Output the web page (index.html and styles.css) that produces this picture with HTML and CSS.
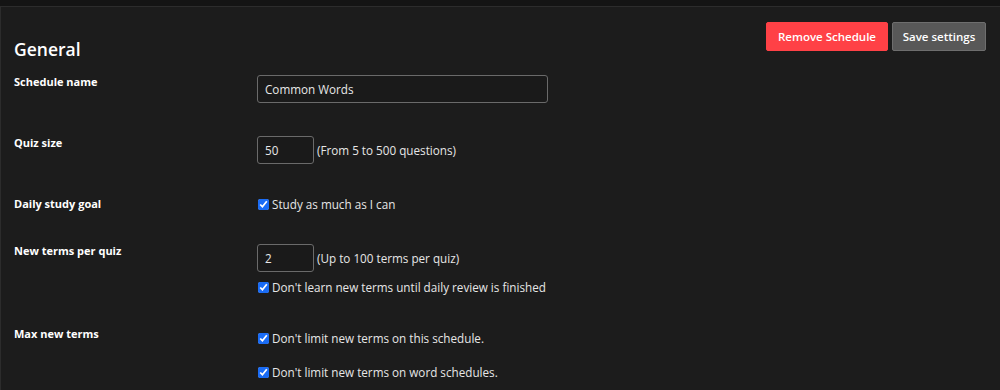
FILE: index.html
```html
<!DOCTYPE html>
<html lang="en">
<head>
  <meta charset="UTF-8">
  <title>Schedule settings</title>
  <link rel="stylesheet" href="styles.css">
</head>
<body>
  <div class="panel">
    <div class="header">
      <h2>General</h2>
      <div class="actions">
        <button class="btn btn-danger">Remove Schedule</button>
        <button class="btn btn-save">Save settings</button>
      </div>
    </div>

    <div class="row">
      <label class="label">Schedule name</label>
      <div class="field">
        <input class="text-input" type="text" value="Common Words">
      </div>
    </div>

    <div class="row">
      <label class="label">Quiz size</label>
      <div class="field">
        <input class="num-input" type="text" value="50"><span class="hint">(From 5 to 500 questions)</span>
      </div>
    </div>

    <div class="row">
      <label class="label">Daily study goal</label>
      <div class="field">
        <label class="check"><input type="checkbox" checked> Study as much as I can</label>
      </div>
    </div>

    <div class="row">
      <label class="label">New terms per quiz</label>
      <div class="field">
        <div><input class="num-input" type="text" value="2"><span class="hint">(Up to 100 terms per quiz)</span></div>
        <label class="check spaced"><input type="checkbox" checked> Don't learn new terms until daily review is finished</label>
      </div>
    </div>

    <div class="row last">
      <label class="label">Max new terms</label>
      <div class="field stack">
        <label class="check"><input type="checkbox" checked> Don't limit new terms on this schedule.</label>
        <label class="check"><input type="checkbox" checked> Don't limit new terms on word schedules.</label>
      </div>
    </div>
  </div>
</body>
</html>
```

FILE: styles.css
```css
body {
  margin: 0;
  padding-top: 6px;
  background: #141414;
  font-family: 'Open Sans', sans-serif;
  font-size: 11.7px;
  color: #e6e6e6;
}
.panel {
  box-sizing: border-box;
  min-height: 384px;
  background: #1c1c1c;
  border-top: 1px solid #2c2c2c;
  border-left: 1px solid #2c2c2c;
  padding: 15px 14px 0 13px;
}
.header {
  display: flex;
  justify-content: space-between;
  align-items: flex-start;
  margin-bottom: 14px;
}
h2 {
  margin: 15px 0 0;
  font-size: 17.5px;
  line-height: 24px;
  font-weight: 600;
  color: #fff;
}
.actions {
  display: flex;
  gap: 4px;
}
.btn {
  font-family: 'Open Sans', sans-serif;
  font-size: 11.5px;
  font-weight: 600;
  color: #fff;
  height: 29px;
  padding: 0;
  white-space: nowrap;
  border-radius: 2px;
  cursor: pointer;
}
.btn-danger {
  background: #ff4146;
  border: 1px solid #ff4146;
  width: 122px;
}
.btn-save {
  background: #585858;
  border: 1px solid #6e6e6e;
  width: 94px;
}
.row {
  display: grid;
  grid-template-columns: 243px 1fr;
  margin-bottom: 33px;
}
.row.last {
  margin-bottom: 0;
}
.label {
  font-size: 11px;
  font-weight: 700;
  color: #fff;
  line-height: 14px;
}
.field {
  line-height: 14px;
}
.text-input, .num-input {
  box-sizing: border-box;
  height: 28px;
  background: #1a1a1a;
  border: 1px solid #6a6a6a;
  border-radius: 3px;
  color: #e8e8e8;
  font-family: 'Open Sans', sans-serif;
  font-size: 11.7px;
  padding: 0 7px;
  vertical-align: middle;
}
.text-input {
  width: 291px;
}
.num-input {
  width: 57px;
}
.hint {
  margin-left: 3px;
  vertical-align: middle;
}
.check {
  display: flex;
  align-items: center;
  gap: 3px;
}
.check input {
  margin: 0 0 0 1px;
  width: 11px;
  height: 11px;
  accent-color: #1a6cf5;
}
.spaced {
  margin-top: 8px;
}
.stack {
  display: flex;
  flex-direction: column;
  gap: 20px;
  padding-top: 4px;
}
```
